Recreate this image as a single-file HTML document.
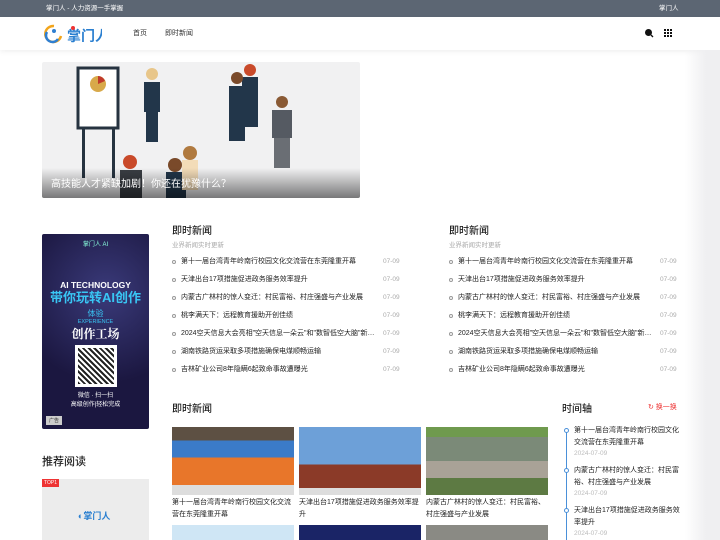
<!DOCTYPE html>
<html><head><meta charset="utf-8"><style>
*{margin:0;padding:0;box-sizing:border-box}
body{width:720px;height:540px;overflow:hidden;background:#fff;font-family:"Liberation Sans","Noto Sans CJK SC",sans-serif;color:#222;position:relative}
.abs{position:absolute}
.top{left:0;top:0;width:720px;height:17px;background:#5c6673;color:#fff;font-size:6.5px;line-height:17px}
.hdr{left:0;top:17px;width:720px;height:33px;background:#fff;box-shadow:0 2px 5px rgba(0,0,0,.06)}
.nav{font-size:7px;color:#333;top:28px}
.rs{left:685px;top:50px;width:35px;height:490px;background:linear-gradient(90deg,rgba(240,240,242,0),#efeff1 60%)}
.h2{font-size:10px;color:#222;font-weight:500}
.sub{font-size:6.5px;color:#aaa}
.li{font-size:7px;color:#222;height:18px;line-height:18px;white-space:nowrap;position:absolute}
.li i{position:absolute;left:0;top:7px;width:4px;height:4px;border:1px solid #999;border-radius:50%}
.li span{position:absolute;left:9px}
.li b{position:absolute;font-weight:normal;color:#aaa;font-size:6.5px}
.cap{font-size:7px;line-height:12px;color:#222}
.tl{font-size:7px;line-height:12px;color:#222}
.tld{font-size:6.5px;color:#bbb}
</style></head><body>
<div class="abs top"><span style="position:absolute;left:46px">掌门人 - 人力资源一手掌握</span><span style="position:absolute;left:659px">掌门人</span></div>
<div class="abs hdr"></div>
<svg class="abs" style="left:42px;top:23px" width="60" height="22" viewBox="0 0 60 22">
<path d="M12 3 A8 8 0 1 0 19 13" fill="none" stroke="#f2a51c" stroke-width="2.5"/>
<path d="M5 9 A6 6 0 0 0 16 16" fill="none" stroke="#2f7fd1" stroke-width="2.5"/>
<circle cx="12" cy="8" r="2" fill="#2f7fd1"/>
<text x="25" y="18" font-size="14" fill="#2a7fd0" font-family="Noto Sans CJK SC" font-weight="bold">掌门人</text>
<circle cx="31" cy="5" r="2" fill="#e33"/></svg>
<div class="abs nav" style="left:133px">首页</div>
<div class="abs nav" style="left:165px">即时新闻</div>
<svg class="abs" style="left:644px;top:28px" width="10" height="10"><circle cx="4.5" cy="4.5" r="3.5" fill="#111"/><path d="M7 7L9 9" stroke="#111" stroke-width="1.3"/></svg>
<svg class="abs" style="left:664px;top:29px" width="8" height="8" fill="#111"><rect x="0" y="0" width="2" height="2"/><rect x="3" y="0" width="2" height="2"/><rect x="6" y="0" width="2" height="2"/><rect x="0" y="3" width="2" height="2"/><rect x="3" y="3" width="2" height="2"/><rect x="6" y="3" width="2" height="2"/><rect x="0" y="6" width="2" height="2"/><rect x="3" y="6" width="2" height="2"/><rect x="6" y="6" width="2" height="2"/></svg>
<div class="abs rs"></div>

<!-- hero -->
<div class="abs" style="left:42px;top:62px;width:318px;height:136px;background:#f1f1f2;overflow:hidden;border-radius:2px">
<svg width="318" height="136" viewBox="0 0 318 136">
<rect x="36" y="6" width="40" height="60" fill="#fff" stroke="#263340" stroke-width="3"/>
<circle cx="56" cy="22" r="8" fill="#d8a94a"/><path d="M56 22L56 14A8 8 0 0 1 63 19Z" fill="#c0392b"/>
<rect x="40" y="66" width="3" height="50" fill="#263340"/><rect x="70" y="66" width="3" height="50" fill="#263340"/>
<circle cx="110" cy="12" r="6" fill="#e8c68a"/><rect x="102" y="20" width="16" height="30" fill="#22364a"/><rect x="104" y="50" width="12" height="30" fill="#22364a"/>
<circle cx="208" cy="8" r="6" fill="#c94a2a"/><rect x="200" y="15" width="16" height="50" fill="#22364a"/>
<circle cx="195" cy="16" r="6" fill="#7a4a2a"/><rect x="187" y="24" width="16" height="55" fill="#22364a"/>
<circle cx="240" cy="40" r="6" fill="#8a5a35"/><rect x="230" y="48" width="20" height="28" fill="#555a62"/><rect x="232" y="76" width="16" height="30" fill="#6a6e74"/>
<circle cx="88" cy="100" r="7" fill="#c94a2a"/><rect x="78" y="108" width="22" height="30" fill="#3a3e44"/>
<circle cx="133" cy="103" r="7" fill="#7a4a2a"/><rect x="124" y="110" width="20" height="28" fill="#22364a"/>
<circle cx="148" cy="91" r="7" fill="#b07a40"/><rect x="140" y="98" width="16" height="30" fill="#f3dcb8"/>
</svg>
<div style="position:absolute;left:0;bottom:0;width:318px;height:30px;background:linear-gradient(rgba(0,0,0,0),rgba(0,0,0,.5))"></div>
<div style="position:absolute;left:9px;top:113px;font-size:10px;color:#fff">高技能人才紧缺加剧！你还在犹豫什么？</div>
</div>

<!-- ad -->
<div class="abs" style="left:42px;top:234px;width:107px;height:195px;background:radial-gradient(circle at 60% 30%,#3a3a7a,#1b1740 60%);border-radius:2px;color:#fff;text-align:center">
<div style="font-size:6px;margin-top:5px;color:#8fd">掌门人 AI</div>
<div style="font-size:8.5px;font-weight:bold;margin-top:32px">AI TECHNOLOGY</div>
<div style="font-size:13px;font-weight:bold;color:#39c6f4;line-height:15px">带你玩转AI创作</div>
<div style="font-size:8px;color:#39c6f4;margin-top:3px">体验</div>
<div style="font-size:5.5px;color:#39c6f4">EXPERIENCE</div>
<div style="font-size:12px;font-family:'Noto Serif CJK SC',serif;font-weight:bold">创作工场</div>
<div style="width:42px;height:42px;margin:3px auto 0;background:#fff;padding:3px"><div style="width:100%;height:100%;background:repeating-linear-gradient(45deg,#222 0 2px,#fff 2px 4px)"></div></div>
<div style="font-size:6px;margin-top:3px">微信 · 扫一扫</div>
<div style="font-size:6px">高级创作|轻松完成</div>
<div style="position:absolute;left:4px;bottom:4px;font-size:5px;background:#ccc;color:#333;padding:1px 3px">广告</div>
</div>

<div class="abs h2" style="left:42px;top:453px;font-size:11px">推荐阅读</div>
<div class="abs" style="left:42px;top:479px;width:107px;height:61px;background:#ececec">
<div style="position:absolute;left:0;top:0;background:#e33;color:#fff;font-size:5px;padding:1px 2px">TOP1</div>
<div style="position:absolute;left:36px;top:30px;font-size:9px;color:#2a7fd0;font-weight:bold">◐掌门人</div></div>

<!-- news cols -->
<div class="abs h2" style="left:172px;top:222px">即时新闻</div>
<div class="abs sub" style="left:172px;top:239px">业界新闻实时更新</div>
<div class="abs h2" style="left:449px;top:222px">即时新闻</div>
<div class="abs sub" style="left:449px;top:239px">业界新闻实时更新</div>
<div id="c1"></div>

<script></script>
<div class="abs" style="left:172px;top:253px;width:232px;height:130px">
<div class="li" style="top:0;width:232px"><i></i><span>第十一届台湾青年岭南行校园文化交流营在东莞隆重开幕</span><b style="left:211px">07-09</b></div>
<div class="li" style="top:18px;width:232px"><i></i><span>天津出台17项措施促进政务服务效率提升</span><b style="left:211px">07-09</b></div>
<div class="li" style="top:36px;width:232px"><i></i><span>内蒙古广林村的惊人变迁：村民富裕、村庄强盛与产业发展</span><b style="left:211px">07-09</b></div>
<div class="li" style="top:54px;width:232px"><i></i><span>桃李满天下：远程教育援助开创佳绩</span><b style="left:211px">07-09</b></div>
<div class="li" style="top:72px;width:232px"><i></i><span>2024空天信息大会亮相"空天信息一朵云"和"数智低空大脑"新…</span><b style="left:211px">07-09</b></div>
<div class="li" style="top:90px;width:232px"><i></i><span>湖南铁路货运采取多项措施确保电煤顺畅运输</span><b style="left:211px">07-09</b></div>
<div class="li" style="top:108px;width:232px"><i></i><span>吉林矿业公司8年隐瞒6起致命事故遭曝光</span><b style="left:211px">07-09</b></div>
</div>
<div class="abs" style="left:449px;top:253px;width:232px;height:130px">
<div class="li" style="top:0;width:232px"><i></i><span>第十一届台湾青年岭南行校园文化交流营在东莞隆重开幕</span><b style="left:211px">07-09</b></div>
<div class="li" style="top:18px;width:232px"><i></i><span>天津出台17项措施促进政务服务效率提升</span><b style="left:211px">07-09</b></div>
<div class="li" style="top:36px;width:232px"><i></i><span>内蒙古广林村的惊人变迁：村民富裕、村庄强盛与产业发展</span><b style="left:211px">07-09</b></div>
<div class="li" style="top:54px;width:232px"><i></i><span>桃李满天下：远程教育援助开创佳绩</span><b style="left:211px">07-09</b></div>
<div class="li" style="top:72px;width:232px"><i></i><span>2024空天信息大会亮相"空天信息一朵云"和"数智低空大脑"新…</span><b style="left:211px">07-09</b></div>
<div class="li" style="top:90px;width:232px"><i></i><span>湖南铁路货运采取多项措施确保电煤顺畅运输</span><b style="left:211px">07-09</b></div>
<div class="li" style="top:108px;width:232px"><i></i><span>吉林矿业公司8年隐瞒6起致命事故遭曝光</span><b style="left:211px">07-09</b></div>
</div>

<!-- image news -->
<div class="abs h2" style="left:172px;top:400px">即时新闻</div>
<div class="abs" style="left:172px;top:427px;width:122px;height:68px;background:linear-gradient(#5d5043 0 20%,#3b7bc8 20% 45%,#e8762a 45% 85%,#ddd 85%)"></div>
<div class="abs" style="left:299px;top:427px;width:122px;height:68px;background:linear-gradient(#6da0d8 0 55%,#8b3a28 55% 90%,#ddd 90%)"></div>
<div class="abs" style="left:426px;top:427px;width:122px;height:68px;background:linear-gradient(#6f9a4e 0 15%,#7b8a78 15% 50%,#a9a297 50% 75%,#5d7a43 75%)"></div>
<div class="abs cap" style="left:172px;top:497px;width:124px">第十一届台湾青年岭南行校园文化交流营在东莞隆重开幕</div>
<div class="abs cap" style="left:299px;top:497px;width:124px">天津出台17项措施促进政务服务效率提升</div>
<div class="abs cap" style="left:426px;top:497px;width:124px">内蒙古广林村的惊人变迁：村民富裕、村庄强盛与产业发展</div>
<div class="abs" style="left:172px;top:525px;width:122px;height:15px;background:#cfe6f5"></div>
<div class="abs" style="left:299px;top:525px;width:122px;height:15px;background:#1a2466"></div>
<div class="abs" style="left:426px;top:525px;width:122px;height:15px;background:#8a8a84"></div>

<!-- timeline -->
<div class="abs h2" style="left:562px;top:400px">时间轴</div>
<div class="abs" style="left:648px;top:402px;font-size:7px;color:#e33">↻ 换一换</div>
<div class="abs" style="left:566px;top:430px;width:1px;height:110px;background:#4a90d9"></div>
<div class="abs" style="left:564px;top:428px;width:5px;height:5px;border:1px solid #4a90d9;border-radius:50%;background:#fff"></div>
<div class="abs" style="left:564px;top:468px;width:5px;height:5px;border:1px solid #4a90d9;border-radius:50%;background:#fff"></div>
<div class="abs" style="left:564px;top:508px;width:5px;height:5px;border:1px solid #4a90d9;border-radius:50%;background:#fff"></div>
<div class="abs tl" style="left:574px;top:425px;width:110px">第十一届台湾青年岭南行校园文化交流营在东莞隆重开幕</div>
<div class="abs tld" style="left:574px;top:450px">2024-07-09</div>
<div class="abs tl" style="left:574px;top:465px;width:110px">内蒙古广林村的惊人变迁：村民富裕、村庄强盛与产业发展</div>
<div class="abs tld" style="left:574px;top:490px">2024-07-09</div>
<div class="abs tl" style="left:574px;top:505px;width:106px">天津出台17项措施促进政务服务效率提升</div>
<div class="abs tld" style="left:574px;top:530px">2024-07-09</div>
</body></html>
